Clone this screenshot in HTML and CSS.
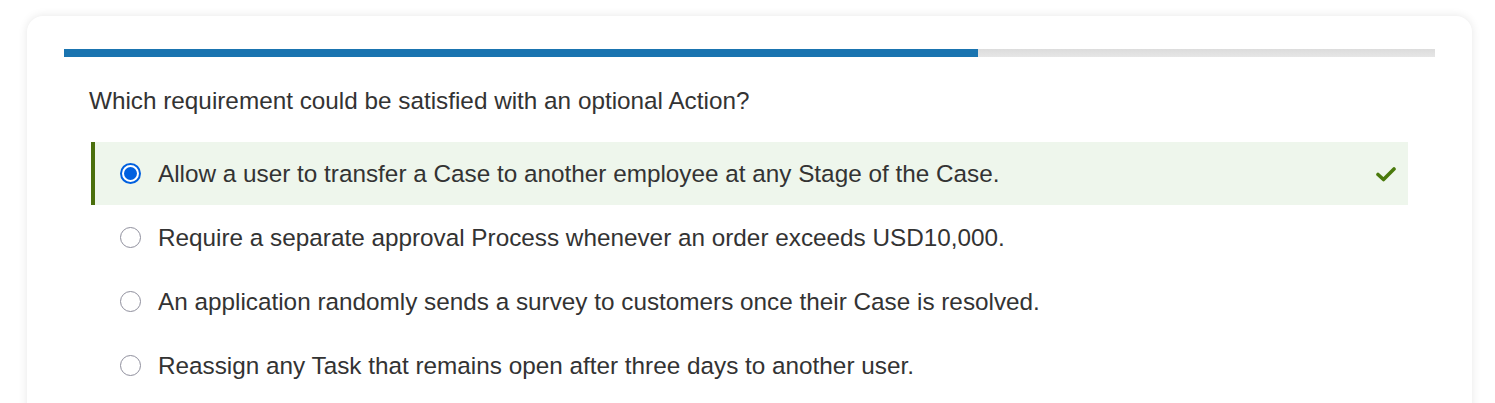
FILE: index.html
```html
<!DOCTYPE html>
<html>
<head>
<meta charset="utf-8">
<link rel="stylesheet" href="styles.css">
</head>
<body>
<div class="card">
  <div class="progress"><div class="progress-fill" style="width:66.7%"></div></div>
  <div class="content">
    <p class="question">Which requirement could be satisfied with an optional Action?</p>
    <ul class="options">
      <li class="option selected">
        <span class="radio checked"></span>
        <span class="label">Allow a user to transfer a Case to another employee at any Stage of the Case.</span>
        <svg class="check" viewBox="0 0 20 16" width="20" height="16"><path d="M2 8.5 L7.5 13.5 L18 3" fill="none" stroke="#4a7a0c" stroke-width="3.6" stroke-linecap="round" stroke-linejoin="round"/></svg>
      </li>
      <li class="option">
        <span class="radio"></span>
        <span class="label">Require a separate approval Process whenever an order exceeds USD10,000.</span>
      </li>
      <li class="option">
        <span class="radio"></span>
        <span class="label">An application randomly sends a survey to customers once their Case is resolved.</span>
      </li>
      <li class="option">
        <span class="radio"></span>
        <span class="label">Reassign any Task that remains open after three days to another user.</span>
      </li>
    </ul>
  </div>
</div>
</body>
</html>
```
FILE: styles.css
```css
html, body {
  margin: 0;
  padding: 0;
  background: #ffffff;
}
body {
  font-family: "Liberation Sans", Arial, sans-serif;
  color: #333333;
  padding: 16px 23px 0 27px;
  overflow: hidden;
  height: 403px;
  box-sizing: border-box;
}
.card {
  background: #fff;
  border-radius: 16px;
  box-shadow: 0 0 10px rgba(0, 0, 0, 0.10);
  padding: 33px 37px 40px;
  min-height: 500px;
}
.progress {
  height: 8px;
  background: linear-gradient(#dcdcdc, #e6e6e6);
}
.progress-fill {
  height: 100%;
  background: #1a74b0;
}
.content {
  padding: 0 27px 0 25px;
}
.question {
  margin: 30px 0 0;
  font-size: 24.3px;
  line-height: 28px;
}
.options {
  list-style: none;
  margin: 27px 0 0 2px;
  padding: 0;
}
.option {
  display: flex;
  align-items: center;
  height: 63px;
  padding-left: 29px;
  padding-right: 12px;
  margin-bottom: 1px;
  font-size: 24.3px;
}
.option.selected {
  background: #eef6ec;
  border-left: 4px solid #4a6f0c;
  padding-left: 25px;
}
.radio {
  flex: none;
  width: 21px;
  height: 21px;
  border-radius: 50%;
  border: 1px solid #8f8f9d;
  box-sizing: border-box;
  background: #fff;
  margin-right: 17px;
  position: relative;
}
.radio.checked {
  border: 2px solid #0060df;
  background: #fff;
}
.radio.checked::after {
  content: "";
  position: absolute;
  left: 2px;
  top: 2px;
  width: 13px;
  height: 13px;
  border-radius: 50%;
  background: #0060df;
}
.label {
  flex: 1;
}
.check {
  flex: none;
}
```
